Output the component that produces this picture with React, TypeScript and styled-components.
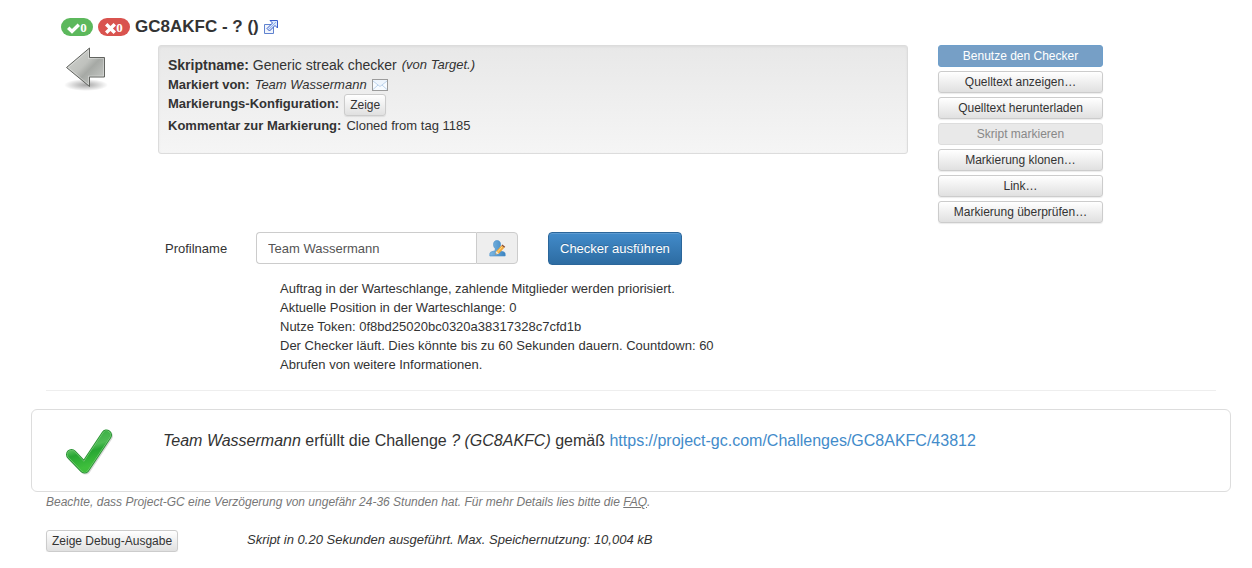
import React from "react";
import styled, { createGlobalStyle, css } from "styled-components";

const GlobalStyle = createGlobalStyle`
  *, *::before, *::after { box-sizing: border-box; }
  body {
    margin: 0;
    background: #fff;
    color: #333;
    font-family: "Liberation Sans", Arial, Helvetica, sans-serif;
    font-size: 13px;
    line-height: 19px;
  }
  button, input { font-family: inherit; margin: 0; }
  svg { display: block; }
`;

const Page = styled.main`
  padding: 16px 36px 0 46px;
`;

const TitleBar = styled.header`
  display: flex;
  align-items: center;
  gap: 5px;
  height: 22px;
  padding-left: 15px;
`;

const Badge = styled.span<{ $color: string }>`
  display: flex;
  align-items: center;
  justify-content: center;
  width: 32px;
  height: 18px;
  padding-top: 2px;
  border-radius: 9px;
  background: ${(p) => p.$color};
  color: #fff;
  font: bold 13px/16px "Liberation Serif", "Times New Roman", serif;
`;

const Title = styled.h1`
  margin: 0;
  font-size: 17px;
  line-height: 22px;
  font-weight: bold;
`;

const IconLink = styled.a`
  display: inline-block;
  vertical-align: middle;
`;

const TopRow = styled.section`
  display: flex;
  align-items: flex-start;
  padding: 7px 113px 0 0;
`;

const BackColumn = styled.div`
  flex: 0 0 112px;
  padding-left: 18px;
`;

const Well = styled.div`
  flex: 1;
  min-height: 109px;
  padding: 9px 9px 18px;
  border: 1px solid #dcdcdc;
  border-radius: 3px;
  background: linear-gradient(to bottom, #e8e8e8 0%, #f5f5f5 100%);
  box-shadow: inset 0 1px 3px rgba(0, 0, 0, 0.05);
`;

const WellLine = styled.div<{ $large?: boolean }>`
  display: flex;
  align-items: flex-start;
  gap: 5px;
  ${(p) => p.$large && css`line-height: 20px;`}
  svg { margin-top: 4px; }
`;

const Large = styled.span`
  font-size: 14px;
`;

const Actions = styled.nav`
  display: flex;
  flex-direction: column;
  flex: 0 0 165px;
  gap: 4px;
  margin-left: 30px;
`;

const SmallButton = styled.button<{ $primary?: boolean }>`
  height: 22px;
  padding: 0 5px;
  border: 1px solid #ccc;
  border-radius: 3px;
  background: linear-gradient(to bottom, #fff 0%, #e0e0e0 100%);
  box-shadow: inset 0 1px 0 rgba(255, 255, 255, 0.15), 0 1px 1px rgba(0, 0, 0, 0.08);
  color: #333;
  font-size: 12px;
  line-height: 18px;
  white-space: nowrap;
  &:disabled {
    border-color: #ddd;
    background: #e9e9e9;
    color: #888;
    box-shadow: none;
  }
  ${(p) =>
    p.$primary &&
    css`
      &:disabled {
        border-color: #6e9fcb;
        background: #769fc6;
        color: #fff;
      }
    `}
`;

const CheckForm = styled.form`
  display: flex;
  align-items: flex-start;
  margin-top: 9px;
`;

const FieldLabel = styled.label`
  flex: 0 0 210px;
  padding-left: 119px;
  line-height: 33px;
`;

const InputGroup = styled.div`
  display: flex;
  width: 262px;
  height: 32px;
`;

const TextInput = styled.input`
  flex: 1;
  min-width: 0;
  padding: 0 11px;
  border: 1px solid #ccc;
  border-right: 0;
  border-radius: 4px 0 0 4px;
  background: #fff;
  color: #555;
  font-size: 13px;
`;

const AddonButton = styled.button`
  display: flex;
  align-items: center;
  justify-content: center;
  width: 42px;
  padding: 0;
  border: 1px solid #ccc;
  border-radius: 0 4px 4px 0;
  background: #eee;
`;

const RunButton = styled.button`
  height: 33px;
  margin-left: 30px;
  padding: 0 11px;
  border: 1px solid #2b669a;
  border-radius: 4px;
  background: linear-gradient(to bottom, #428bca 0%, #2d6ca2 100%);
  box-shadow: inset 0 1px 0 rgba(255, 255, 255, 0.15);
  color: #fff;
  font-size: 13px;
  text-shadow: 0 -1px 0 rgba(0, 0, 0, 0.2);
`;

const QueueLog = styled.div`
  padding: 14px 0 16px 234px;
`;

const Divider = styled.hr`
  height: 1px;
  margin: 0 0 18px;
  border: 0;
  background: #eee;
`;

const ResultPanel = styled.section`
  display: flex;
  height: 83px;
  margin: 0 -15px;
  padding: 18px 32px;
  border: 1px solid #ddd;
  border-radius: 6px;
`;

const ResultText = styled.p`
  margin: 0 0 0 49px;
  padding-top: 2px;
  font-size: 16px;
  line-height: 22px;
`;

const ResultLink = styled.a`
  color: #428bca;
  text-decoration: none;
`;

const Note = styled.p`
  margin: 0;
  color: #777;
  font-size: 12px;
  line-height: 20px;
  font-style: italic;
  a { color: inherit; }
`;

const Footer = styled.footer`
  display: grid;
  grid-template-columns: 201px 1fr;
  align-items: start;
  justify-items: start;
  margin-top: 18px;
`;

const CheckGlyph = () => (
  <svg width="13" height="11" viewBox="0 0 13 11" aria-hidden="true">
    <path d="M0 6 2.4 3.6 5 6.1 10.6.5 13 2.9 5 10.8Z" fill="#fff" />
  </svg>
);

const CrossGlyph = () => (
  <svg width="11" height="11" viewBox="0 0 11 11" aria-hidden="true">
    <path d="M2.4 0 5.5 3.1 8.6 0 11 2.4 7.9 5.5 11 8.6 8.6 11 5.5 7.9 2.4 11 0 8.6 3.1 5.5 0 2.4Z" fill="#fff" />
  </svg>
);

const ExternalIcon = () => (
  <svg width="14" height="14" viewBox="0 0 14 14" aria-hidden="true">
    <path d="M.5 4.500h9v9h-9Z" fill="#f1f5fb" stroke="#5f82cf" />
    <path d="M6 .5h7.500V8L11 5.500 5.500 11 3 8.500 8.500 3Z" fill="#dbe8fb" stroke="#3a5ccb" />
    <path d="M5 9.200 12 2" stroke="#8fb0ee" fill="none" />
  </svg>
);

const BackArrow = () => (
  <svg width="46" height="46" viewBox="0 0 46 46" aria-hidden="true">
    <defs>
      <linearGradient id="arrowFill" x1="0" y1="0" x2="1" y2="1">
        <stop offset="0" stopColor="#d2d4d0" />
        <stop offset="0.45" stopColor="#bfc1bd" />
        <stop offset="0.58" stopColor="#a6a9a5" />
        <stop offset="1" stopColor="#cfd1ce" />
      </linearGradient>
      <radialGradient id="arrowShadow">
        <stop offset="0" stopColor="#000" stopOpacity="0.35" />
        <stop offset="1" stopColor="#000" stopOpacity="0" />
      </radialGradient>
    </defs>
    <ellipse cx="22" cy="40" rx="22" ry="6" fill="url(#arrowShadow)" />
    <path d="M2.500 22.500 25.500 3v9.500h15v19.500h-15v9.500Z" fill="url(#arrowFill)" stroke="#61635f" />
    <path d="M4.200 22.500 24.500 5.200v8.300h15v17.500h-15v8.300Z" fill="none" stroke="#fff" strokeOpacity="0.3" />
  </svg>
);

const MailIcon = () => (
  <svg width="16" height="12" viewBox="0 0 16 12" aria-hidden="true">
    <rect x="0.5" y="0.5" width="15" height="11" fill="#f7fbff" stroke="#9b9b9b" />
    <path d="M1 1h14L8 7Z" fill="#eef5fd" />
    <path d="M1 10.500 6 6M15 10.500 10 6M1 2l7 5.500L15 2" fill="none" stroke="#bcd3ec" />
  </svg>
);

const UserEditIcon = () => (
  <svg width="17" height="17" viewBox="0 0 17 17" aria-hidden="true">
    <defs>
      <linearGradient id="userFill" x1="0" y1="0" x2="1" y2="0">
        <stop offset="0" stopColor="#7fb9e3" />
        <stop offset="1" stopColor="#3a83c0" />
      </linearGradient>
    </defs>
    <path
      d="M8 .5C5.800.5 4.500 2 4.500 4.500c0 1.800.6 3 1.700 4v2.200L2.500 11.800C1.300 12.200.8 13 .8 14v2h15.400v-2c0-1.200-.7-1.900-1.900-2.300L10 10.600V8.500c1-1 1.600-2.200 1.600-4C11.600 2 10.200.5 8 .5Z"
      fill="url(#userFill)"
      stroke="#4a8fc9"
      strokeWidth="0.6"
    />
    <path d="M6.500 14.500 7.200 11.300 12.500 5.500 15.300 7.800 10 13.600Z" fill="#f2a93b" />
    <path d="M8.400 12.200 13.600 6.400" stroke="#ffdc8b" />
    <path d="M6.500 14.500 7.200 11.300 10 13.600Z" fill="#f7ead2" />
    <path d="M12.500 5.500 13.400 4.500 16.200 6.800 15.300 7.800Z" fill="#8d4c2a" />
    <path d="M6.500 14.500 6.800 13.300 7.700 14.100Z" fill="#333" />
  </svg>
);

const SuccessIcon = () => (
  <svg width="50" height="50" viewBox="0 0 50 50" aria-hidden="true">
    <defs>
      <linearGradient id="successFill" x1="0" y1="0" x2="0.3" y2="1">
        <stop offset="0" stopColor="#35ad42" />
        <stop offset="0.45" stopColor="#4fbb55" />
        <stop offset="0.6" stopColor="#27a633" />
        <stop offset="1" stopColor="#3fbf3c" />
      </linearGradient>
    </defs>
    <path d="M7.500 27 20.500 40 42.500 7" transform="translate(1 1)" fill="none" stroke="#000" strokeOpacity="0.15" strokeWidth="11" strokeLinecap="round" strokeLinejoin="round" />
    <path d="M7.500 26.500 20.500 40 42.500 7" fill="none" stroke="#2a9535" strokeWidth="11" strokeLinecap="round" strokeLinejoin="round" />
    <path d="M7.500 26.500 20.500 40 42.500 7" fill="none" stroke="#86d383" strokeWidth="9" strokeLinecap="round" strokeLinejoin="round" />
    <path d="M7.500 26.500 20.500 40 42.500 7" fill="none" stroke="url(#successFill)" strokeWidth="8" strokeLinecap="round" strokeLinejoin="round" />
  </svg>
);

const queueMessages = [
  "Auftrag in der Warteschlange, zahlende Mitglieder werden priorisiert.",
  "Aktuelle Position in der Warteschlange: 0",
  "Nutze Token: 0f8bd25020bc0320a38317328c7cfd1b",
  "Der Checker läuft. Dies könnte bis zu 60 Sekunden dauern. Countdown: 60",
  "Abrufen von weitere Informationen.",
];

const actions = [
  { label: "Benutze den Checker", primary: true, disabled: true },
  { label: "Quelltext anzeigen…" },
  { label: "Quelltext herunterladen" },
  { label: "Skript markieren", disabled: true },
  { label: "Markierung klonen…" },
  { label: "Link…" },
  { label: "Markierung überprüfen…" },
];

export default function App() {
  return (
    <>
      <GlobalStyle />
      <Page>
        <TitleBar>
          <Badge $color="#5cb85c"><CheckGlyph />0</Badge>
          <Badge $color="#d9534f"><CrossGlyph />0</Badge>
          <Title>GC8AKFC - ? ()</Title>
          <IconLink href="#cache" aria-label="Cache"><ExternalIcon /></IconLink>
        </TitleBar>

        <TopRow>
          <BackColumn>
            <IconLink href="#back" aria-label="Zurück"><BackArrow /></IconLink>
          </BackColumn>
          <Well>
            <WellLine $large>
              <Large><b>Skriptname:</b> Generic streak checker</Large>
              <i>(von Target.)</i>
            </WellLine>
            <WellLine>
              <b>Markiert von:</b>
              <i>Team Wassermann</i>
              <IconLink href="#mail" aria-label="Nachricht"><MailIcon /></IconLink>
            </WellLine>
            <WellLine>
              <b>Markierungs-Konfiguration:</b>
              <SmallButton type="button">Zeige</SmallButton>
            </WellLine>
            <WellLine>
              <b>Kommentar zur Markierung:</b>
              <span>Cloned from tag 1185</span>
            </WellLine>
          </Well>
          <Actions>
            {actions.map((a) => (
              <SmallButton key={a.label} type="button" $primary={a.primary} disabled={a.disabled}>
                {a.label}
              </SmallButton>
            ))}
          </Actions>
        </TopRow>

        <CheckForm onSubmit={(e) => e.preventDefault()}>
          <FieldLabel htmlFor="profile">Profilname</FieldLabel>
          <InputGroup>
            <TextInput id="profile" type="text" defaultValue="Team Wassermann" />
            <AddonButton type="button" aria-label="Profil wählen"><UserEditIcon /></AddonButton>
          </InputGroup>
          <RunButton type="submit">Checker ausführen</RunButton>
        </CheckForm>

        <QueueLog>
          {queueMessages.map((m) => <div key={m}>{m}</div>)}
        </QueueLog>
        <Divider />

        <ResultPanel>
          <SuccessIcon />
          <ResultText>
            <i>Team Wassermann</i> erfüllt die Challenge <i>? (GC8AKFC)</i> gemäß{" "}
            <ResultLink href="https://project-gc.com/Challenges/GC8AKFC/43812">
              https://project-gc.com/Challenges/GC8AKFC/43812
            </ResultLink>
          </ResultText>
        </ResultPanel>
        <Note>
          Beachte, dass Project-GC eine Verzögerung von ungefähr 24-36 Stunden hat. Für mehr Details lies bitte die{" "}
          <a href="#faq">FAQ</a>.
        </Note>

        <Footer>
          <SmallButton type="button">Zeige Debug-Ausgabe</SmallButton>
          <i>Skript in 0.20 Sekunden ausgeführt. Max. Speichernutzung: 10,004 kB</i>
        </Footer>
      </Page>
    </>
  );
}
